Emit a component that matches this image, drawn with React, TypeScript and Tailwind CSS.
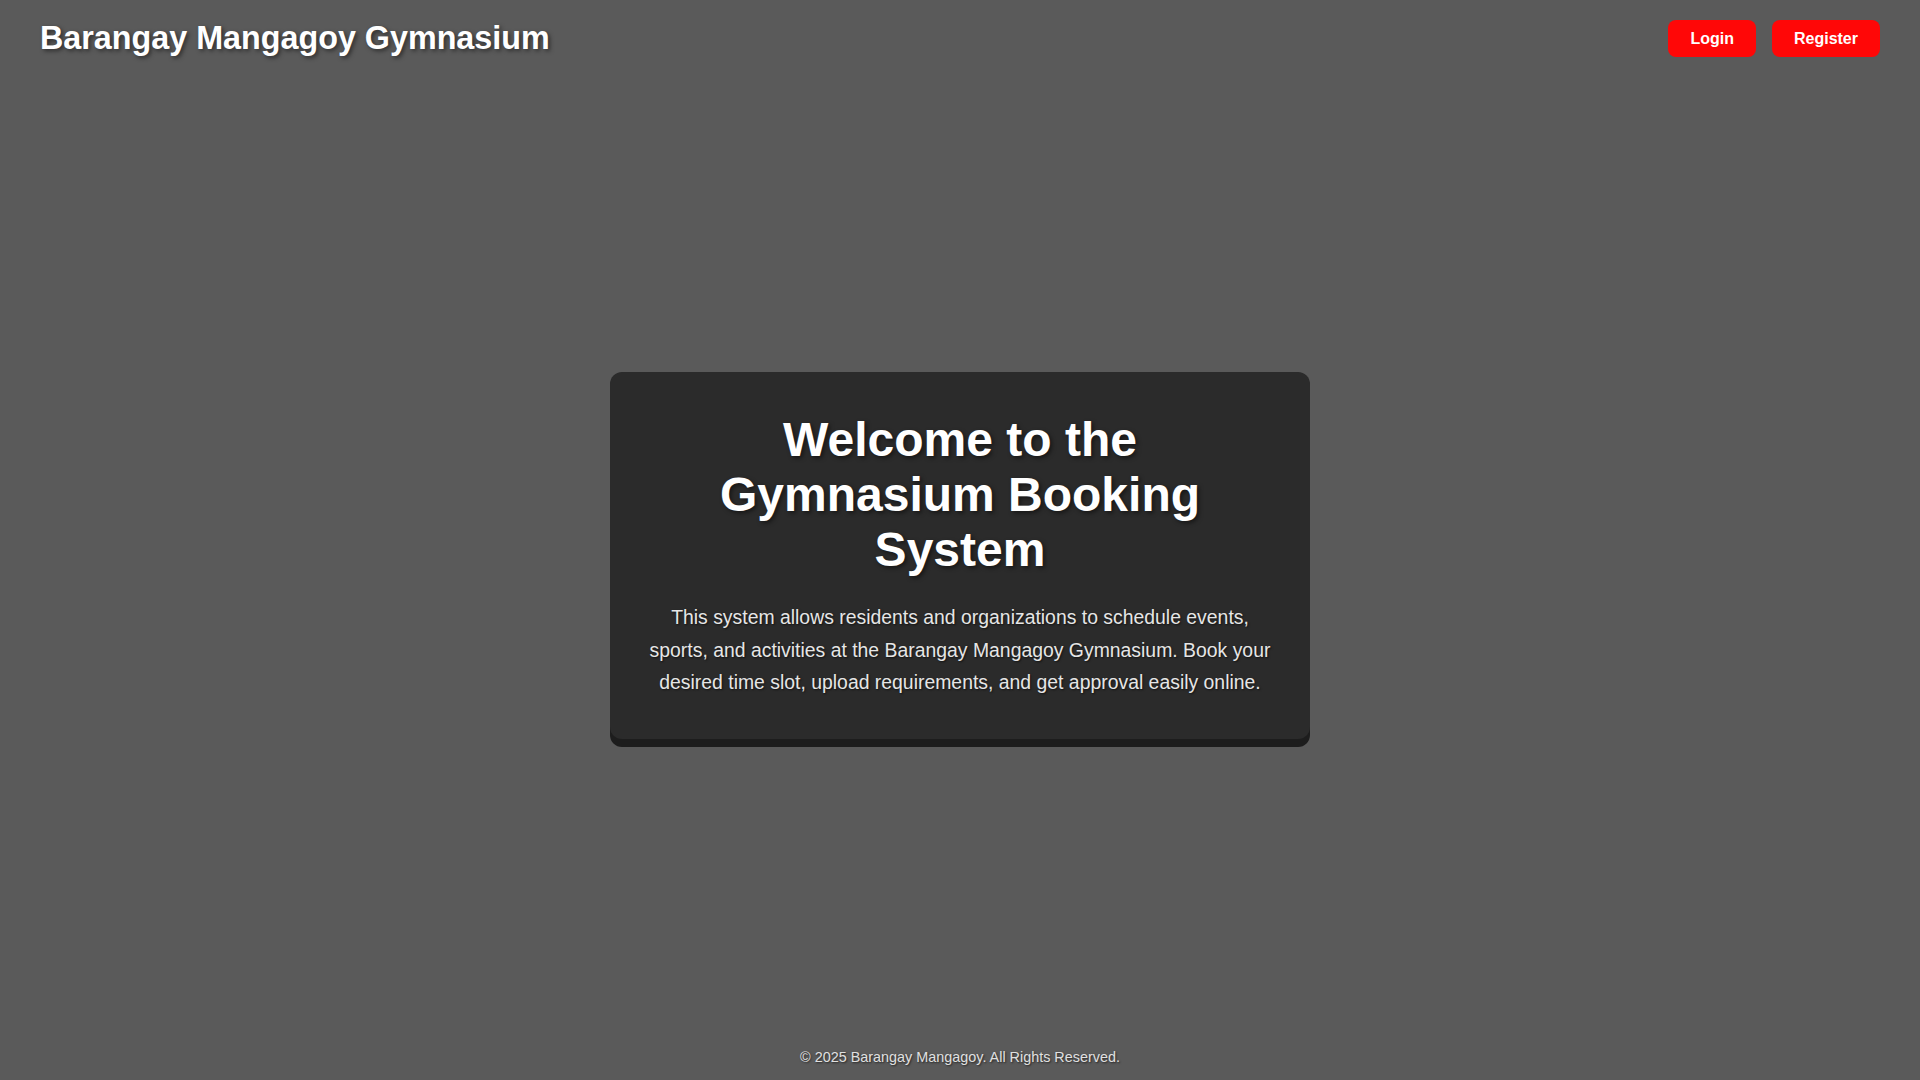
export default function App() {
  return (
    <div
      className="flex min-h-screen flex-col bg-[#5a5a5a] text-white"
      style={{ fontFamily: '"Liberation Sans", Arial, sans-serif' }}
    >
      <header className="flex items-center justify-between px-10 py-5">
        <h1 className="text-[32.3px] font-bold leading-[1.15] [text-shadow:2px_2px_4px_rgba(0,0,0,0.5)]">
          Barangay Mangagoy Gymnasium
        </h1>
        <nav className="flex items-center gap-4">
          <a
            href="#"
            className="flex h-[37px] items-center rounded-lg bg-[#ff0707] px-[22px] text-base font-bold text-white"
          >
            Login
          </a>
          <a
            href="#"
            className="flex h-[37px] items-center rounded-lg bg-[#ff0707] px-[22px] text-base font-bold text-white"
          >
            Register
          </a>
        </nav>
      </header>

      <main className="flex flex-1 items-center justify-center">
        <section className="w-[700px] rounded-xl bg-[#2b2b2b] px-9 py-10 text-center shadow-[0_8px_0_#1d1d1d]">
          <h2 className="mb-6 text-5xl font-bold leading-[1.15] [text-shadow:2px_2px_4px_rgba(0,0,0,0.5)]">
            Welcome to the Gymnasium Booking System
          </h2>
          <p className="text-[19.4px] leading-[1.68] text-[#e6e6e6] [text-shadow:1px_1px_2px_rgba(0,0,0,0.6)]">
            This system allows residents and organizations to schedule events,
            sports, and activities at the Barangay Mangagoy Gymnasium. Book your
            desired time slot, upload requirements, and get approval easily online.
          </p>
        </section>
      </main>

      <footer className="pt-[14px] pb-[11px] text-center text-[14.4px] text-[#e0e0e0] [text-shadow:1px_1px_2px_rgba(0,0,0,0.6)]">
        © 2025 Barangay Mangagoy. All Rights Reserved.
      </footer>
    </div>
  );
}
